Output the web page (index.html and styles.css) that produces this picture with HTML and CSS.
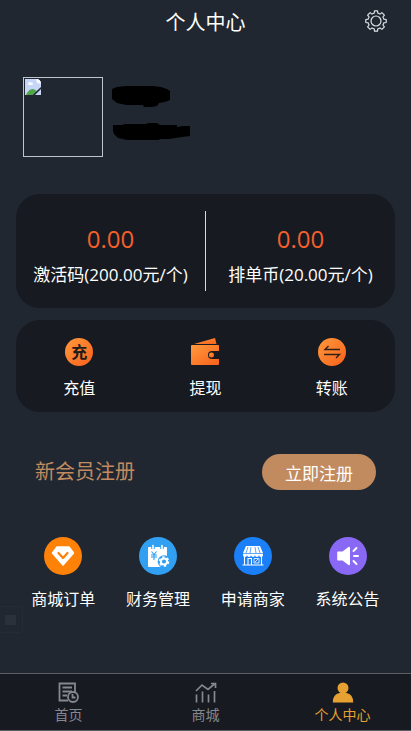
FILE: index.html
```html
<!DOCTYPE html>
<html lang="zh-CN">
<head>
<meta charset="utf-8">
<meta name="viewport" content="width=device-width, initial-scale=1">
<title>个人中心</title>
<link rel="stylesheet" href="styles.css">
</head>
<body>
<svg class="defs" width="0" height="0" aria-hidden="true">
  <defs>
    <linearGradient id="orange" x1="0" y1="0" x2="1" y2="1">
      <stop offset="0" stop-color="#ff9a3c"/>
      <stop offset="1" stop-color="#f9601c"/>
    </linearGradient>
  </defs>
</svg>

<header class="topbar">
  <h1 class="title">个人中心</h1>
  <a class="settings" href="#" aria-label="设置">
    <svg width="22" height="22" viewBox="0 0 22 22" fill="none" stroke="#dde1e6" stroke-width="1.2" stroke-linejoin="round">
      <path d="M9.500 .8h3l.3 2.400q1.200.3 2.200.9l1.900-1.500 2.500 2.500-1.500 1.900q.6 1 .9 2.200l2.400.3v3l-2.400.3q-.3 1.200-.9 2.200l1.500 1.900-2.500 2.500-1.900-1.500q-1 .6-2.200.9l-.3 2.400h-3l-.3-2.400q-1.200-.3-2.200-.9l-1.900 1.500-2.500-2.500 1.500-1.900q-.6-1-.9-2.200L.8 12.500v-3l2.400-.3q.3-1.200.9-2.200L2.600 5.100l2.500-2.500L7 4.100q1-.6 2.200-.9z"/>
      <circle cx="11" cy="11" r="5"/>
    </svg>
  </a>
</header>

<main class="content">
  <section class="profile">
    <div class="avatar">
      <svg width="16" height="16" viewBox="0 0 16 16">
        <path fill="#c6d6f6" d="M0 0h11q5 0 5 5v11H0z"/>
        <path fill="#f6f9ff" d="M3 5c0-2 2-2.500 3-1.500 2-.5 3 2 1 2.500H4C3 6 3 5.500 3 5zM11 0q5 0 5 5l-4-1z"/>
        <path fill="#4fa848" d="M1 16c1-3 4-6 6.500-6 2 0 3 1 4 2l-4 4z"/>
        <path fill="#202731" d="M16 8v2l-6 6H7.500z"/>
      </svg>
    </div>
    <div class="identity">
      <svg width="58" height="21" viewBox="0 0 58 21"><path d="M0 3 5 1 14 0h27l8 1 6 2 3 2v9l-5 2-6 1-2 3-5 1h-8l-1-2H14l-9-2-5-4z"/></svg>
      <svg width="78" height="18" viewBox="0 0 78 18"><path d="M1 2h9l3-1h21l2-1h9l3 2h17v2l6-1h7v10l-8 1-13 2H49l-3 1H15l-9-2-4-4-1-3z"/></svg>
    </div>
  </section>

  <section class="card balances">
    <div class="balance">
      <strong class="amount">0.00</strong>
      <span class="unit">激活码(200.00元/个)</span>
    </div>
    <div class="balance">
      <strong class="amount">0.00</strong>
      <span class="unit">排单币(20.00元/个)</span>
    </div>
  </section>

  <nav class="card actions" aria-label="资金">
    <a class="action" href="#">
      <span class="coin" aria-hidden="true">充</span>
      <span>充值</span>
    </a>
    <a class="action" href="#">
      <svg width="28" height="28" viewBox="0 0 28 28">
        <path fill="url(#orange)" d="M3 6 24 0l1.500 6z"/>
        <path fill="url(#orange)" d="M1 7h26q1 0 1 1v5h-7a4 4 0 0 0 0 8h7v5q0 1-1 1H1q-1 0-1-1V8q0-1 1-1z"/>
        <circle cx="20.500" cy="17" r="2.500" fill="url(#orange)"/>
      </svg>
      <span>提现</span>
    </a>
    <a class="action" href="#">
      <svg width="28" height="28" viewBox="0 0 28 28">
        <circle cx="14" cy="14" r="14" fill="url(#orange)"/>
        <path fill="none" stroke="#30201a" stroke-width="1.400" d="M22 11.500H7l3.500-3.500M6 16.500h15.500L18 20"/>
      </svg>
      <span>转账</span>
    </a>
  </nav>

  <section class="register">
    <h2 class="register-title">新会员注册</h2>
    <button class="register-button" type="button">立即注册</button>
  </section>

  <nav class="services" aria-label="服务">
    <a class="service" href="#">
      <svg width="38" height="38" viewBox="0 0 38 38">
        <circle cx="19" cy="19" r="19" fill="#ff8208"/>
        <path fill="#fff" stroke="#fff" stroke-width="1.500" stroke-linejoin="round" d="M13 10h12l4.500 6L19 28 8.500 16z"/>
        <path fill="none" stroke="#ff8208" stroke-width="2.200" stroke-linecap="round" stroke-linejoin="round" d="m14.500 16 4.500 5 4.500-5"/>
      </svg>
      <span>商城订单</span>
    </a>
    <a class="service" href="#">
      <svg width="38" height="38" viewBox="0 0 38 38">
        <circle cx="19" cy="19" r="19" fill="#31a0f2"/>
        <path fill="#fff" d="M10 10h17q1 0 1 1v19H10q-1 0-1-1V11q0-1 1-1z"/>
        <path stroke="#31a0f2" stroke-width="3.500" d="M14 8v4M23 8v4"/>
        <path stroke="#fff" stroke-width="1.600" stroke-linecap="round" d="M14 8.500v3M23 8.500v3"/>
        <path fill="none" stroke="#31a0f2" stroke-width="1.100" d="m12.500 14.500 2.500 3 2.500-3M12 18h6M12 20h6M15 17.500V23"/>
        <circle cx="25" cy="24.500" r="6.300" fill="#31a0f2"/>
        <circle cx="25" cy="24.500" r="3.100" fill="none" stroke="#fff" stroke-width="2"/>
        <circle cx="25" cy="24.500" r="4.500" fill="none" stroke="#fff" stroke-width="1.600" stroke-dasharray="2.400 2.312"/>
      </svg>
      <span>财务管理</span>
    </a>
    <a class="service" href="#">
      <svg width="38" height="38" viewBox="0 0 38 38">
        <circle cx="19" cy="19" r="19" fill="#1b80f7"/>
        <path fill="#fff" d="M12 9h14l3 7v2a2 2 0 0 1-4 0 2 2 0 0 1-4 0 2 2 0 0 1-4 0 2 2 0 0 1-4 0 2 2 0 0 1-4 0v-2z"/>
        <path fill="none" stroke="#1b80f7" stroke-width=".7" d="m14 10-2 6M17 10l-1 6M21 10l1 6M24 10l2 6M9 16.500h20"/>
        <path fill="none" stroke="#fff" stroke-width="1.100" d="M10.500 19v8.500M27.500 19v8.500M8.500 28h21M14 27.500v-6h3.500v6"/>
        <path fill="none" stroke="#fff" stroke-width=".8" d="M20 21.500h5V26h-5zM21 25l3-3"/>
      </svg>
      <span>申请商家</span>
    </a>
    <a class="service" href="#">
      <svg width="38" height="38" viewBox="0 0 38 38">
        <circle cx="19" cy="19" r="19" fill="#8968f6"/>
        <path fill="#fff" d="M9 14.500h4.500l6-4.500q1.500-.8 1.500 1v16q0 1.800-1.500 1l-6-4.500H9q-.8 0-.8-1v-7q0-1 .8-1z"/>
        <path fill="none" stroke="#fff" stroke-width="1.900" stroke-linecap="round" d="m24.500 14 3-3M25 19h4M24.500 24l3 3"/>
      </svg>
      <span>系统公告</span>
    </a>
  </nav>
</main>

<div class="float-handle" aria-hidden="true"></div>

<nav class="tabbar" aria-label="主导航">
  <a class="tab" href="#">
    <svg width="22" height="22" viewBox="0 0 22 22" fill="none" stroke="#85888e" stroke-width="1.800">
      <path d="M10 18.500H1.500v-17H17V10M4.500 5.500H14M4.500 9.500H14M4.500 13.500H9"/>
      <circle cx="15" cy="15" r="5"/>
      <path d="M14.500 12v3.500h3"/>
    </svg>
    <span>首页</span>
  </a>
  <a class="tab" href="#">
    <svg width="22" height="22" viewBox="0 0 22 22" fill="none" stroke="#85888e" stroke-width="1.700">
      <path d="m1 9 6-6 6 4.500 7-6M16 1.500h4.500V6M1.500 20.500v-8M7.500 20.500v-11M13.500 20.500v-8M19.500 20.500V9"/>
    </svg>
    <span>商城</span>
  </a>
  <a class="tab tab-active" href="#" aria-current="page">
    <svg width="22" height="22" viewBox="0 0 22 22" fill="#e6a132">
      <circle cx="11" cy="6" r="5.500"/>
      <path d="M.8 20.500q0-8.500 6.700-9.500h7q6.700 1 6.700 9.500z"/>
    </svg>
    <span>个人中心</span>
  </a>
</nav>
</body>
</html>
```
FILE: styles.css
```css
* {
  box-sizing: border-box;
}

body {
  display: flex;
  flex-direction: column;
  min-height: 100vh;
  margin: 0;
  background: #202731;
  color: #fff;
  font-family: "Open Sans", "Noto Sans CJK SC", sans-serif;
  font-size: 16px;
  line-height: 24px;
}

a {
  color: inherit;
  text-decoration: none;
}

svg {
  display: block;
}

.defs {
  position: absolute;
}

.topbar {
  display: grid;
  grid-template-columns: 1fr auto 1fr;
  align-items: start;
  padding: 10px 24px;
}

.title {
  grid-column: 2;
  margin: 0;
  font-size: 20px;
  font-weight: 400;
  line-height: 26px;
}

.settings {
  justify-self: end;
}

.content {
  padding: 0 16px;
}

.profile {
  display: flex;
  gap: 9px;
  padding: 31px 7px 37px;
}

.avatar {
  width: 80px;
  height: 80px;
  padding: 1px;
  border: 1px solid #c0c4cc;
}

.identity {
  display: flex;
  flex-direction: column;
  gap: 16px;
  padding-top: 9px;
}

.card {
  display: flex;
  border-radius: 24px;
  background: #171a20;
}

.balances {
  padding: 17px 0;
}

.balance {
  display: flex;
  flex: 1;
  flex-direction: column;
  align-items: center;
  gap: 8px;
  padding: 12px 0 4px;
}

.balance + .balance {
  border-left: 1px solid #d8dadd;
}

.amount {
  color: #f55f2b;
  font-size: 24px;
  font-weight: 400;
  line-height: 32px;
}

.unit {
  font-size: 17px;
  line-height: 24px;
  white-space: nowrap;
}

.actions {
  margin-top: 12px;
  padding: 18px 0 12px;
}

.action {
  display: flex;
  flex: 1;
  flex-direction: column;
  align-items: center;
  gap: 10px;
}

.coin {
  width: 28px;
  height: 28px;
  border-radius: 50%;
  background: linear-gradient(135deg, #ff9a3c, #f9601c);
  color: #211a1b;
  font-size: 16px;
  font-weight: 700;
  line-height: 28px;
  text-align: center;
}

.register {
  display: flex;
  align-items: center;
  justify-content: space-between;
  padding: 42px 19px 47px;
}

.register-title {
  margin: 0;
  color: #c28b60;
  font-size: 20px;
  font-weight: 400;
  line-height: 26px;
}

.register-button {
  height: 36px;
  padding: 0 23px;
  border: 0;
  border-radius: 18px;
  background: #c28b5f;
  color: #fff;
  font-family: inherit;
  font-size: 17px;
}

.services {
  display: grid;
  grid-template-columns: repeat(4, 1fr);
}

.service {
  display: flex;
  flex-direction: column;
  align-items: center;
  gap: 12px;
}

.float-handle {
  position: fixed;
  bottom: 98px;
  left: 0;
  width: 23px;
  height: 27px;
  padding: 8px 5px;
  border: 1px solid #262c36;
  border-left: 0;
  border-radius: 0 4px 4px 0;
}

.float-handle::before {
  display: block;
  width: 11px;
  height: 10px;
  background: #2b313b;
  content: "";
}

.tabbar {
  display: flex;
  margin-top: auto;
  padding: 8px 0 5px;
  border-top: 1px solid #5b5e63;
  border-bottom: 1px solid #5b5e63;
  background: #171a20;
}

.tab {
  display: flex;
  flex: 1;
  flex-direction: column;
  align-items: center;
  color: #85888e;
  font-size: 14px;
  line-height: 21px;
}

.tab-active {
  color: #e6a132;
}
```
